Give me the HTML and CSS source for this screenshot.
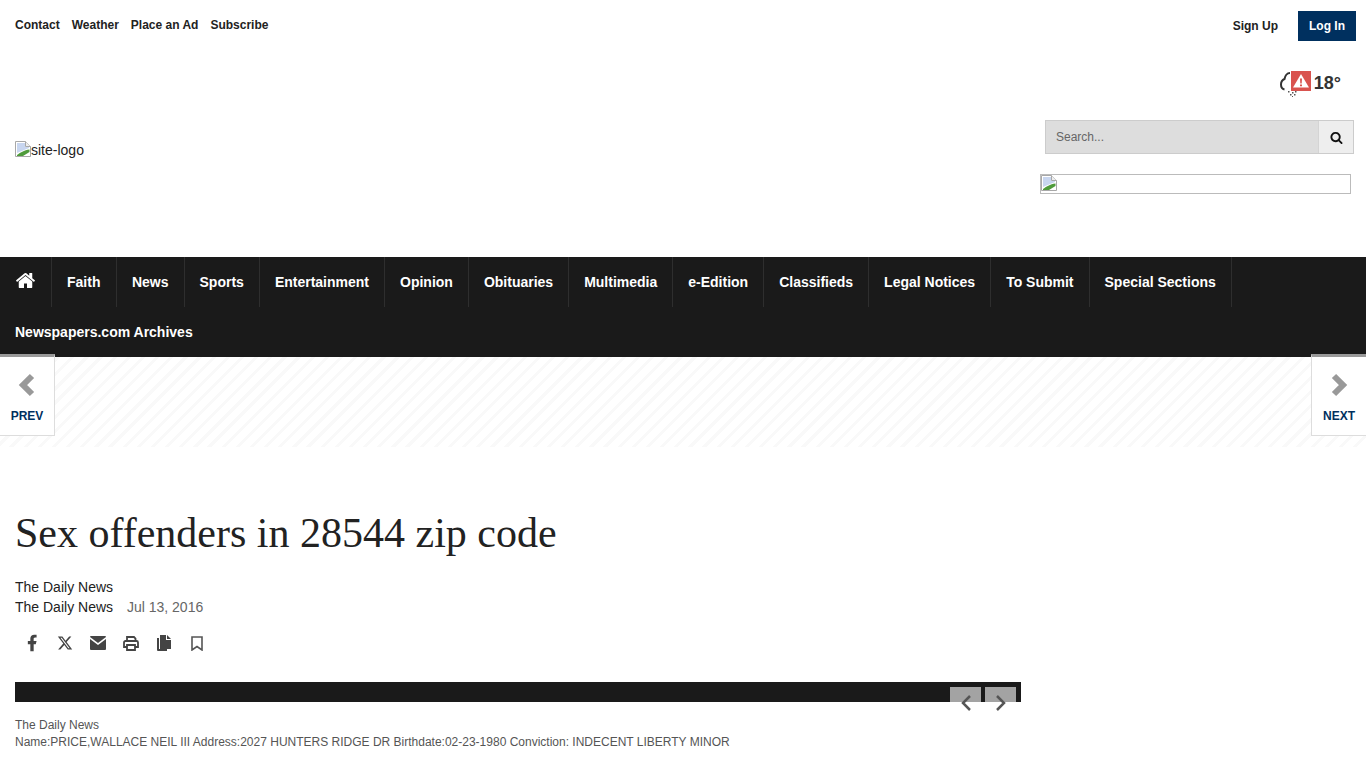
FILE: index.html
```html
<!DOCTYPE html>
<html lang="en">

<head>
    <meta charset="UTF-8" />
    <meta name="viewport" content="width=device-width, initial-scale=1.0" />
    <title>Sex offenders in 28544 zip code</title>
    <link rel="stylesheet" href="styles.css">
</head>

<body>
    <header>
        <div class="top-bar">
            <ul class="top-links">
                <li><a href="#">Contact</a></li>
                <li><a href="#">Weather</a></li>
                <li><a href="#">Place an Ad</a></li>
                <li><a href="#">Subscribe</a></li>
            </ul>
            <div class="account">
                <a href="#" class="sign-up">Sign Up</a>
                <a href="#" class="log-in">Log In</a>
            </div>
        </div>

        <div class="masthead">
            <a href="#" class="logo">
                <svg class="broken-img" viewBox="0 0 16 16">
                    <path d="M.5.5h10l5 5v10H.5z" fill="#fff" stroke="#a8a8a8" />
                    <path d="M2 2h8v4h4v1L2 12z" fill="#c8d6f0" />
                    <path d="M2 15v-1C5 12 9 9 14.500 8.500V11L8 15z" fill="#4f9b3c" />
                    <path d="M10.500.5v5h5" fill="#eee" stroke="#a8a8a8" />
                </svg>site-logo
            </a>
            <div class="masthead-right">
                <div class="weather">
                    <span class="weather-icon">
                        <svg class="cloud" viewBox="0 0 20 26">
                            <path d="M10 2C7 2 5 5 4.500 8 2 9 1 11 1 13.500S2 18 4.500 18.500" fill="none" stroke="#333" stroke-width="2" />
                            <path d="M8 20h1.500v1.500H8zM12 21h1.500v1.500H12zM15 20h1.500v1.500H15zM14 23h1.500v1.500H14zM10 23h1.500v1.500H10zM12 25h1v1h-1z" fill="#555" />
                        </svg>
                        <span class="alert">
                            <svg viewBox="0 0 20 20">
                                <path d="M10 3 18 16.500H2z" fill="#fff" />
                                <path d="M9 7.500h2l-.3 5h-1.400zM9 13.500h2v1.700H9z" fill="#d9534f" />
                            </svg>
                        </span>
                    </span>
                    <span class="temp">18°</span>
                </div>
                <form action="#" class="search">
                    <input type="text" placeholder="Search..." />
                    <button class="search-btn">
                        <svg viewBox="0 0 1792 1792">
                            <path d="M1216 832q0-185-131.500-316.500t-316.500-131.500-316.500 131.500-131.500 316.500 131.500 316.500 316.500 131.500 316.500-131.500 131.500-316.500zm512 832q0 52-38 90t-90 38q-54 0-90-38l-343-342q-179 124-399 124-143 0-273.500-55.500t-225-150-150-225-55.500-273.500 55.500-273.500 150-225 225-150 273.500-55.500 273.500 55.500 225 150 150 225 55.500 273.500q0 220-124 399l343 343q37 37 37 90z" />
                        </svg>
                    </button>
                </form>
                <div class="ad-box">
                    <svg class="broken-img" viewBox="0 0 16 16">
                        <path d="M.5.5h10l5 5v10H.5z" fill="#fff" stroke="#a8a8a8" />
                        <path d="M2 2h8v4h4v1L2 12z" fill="#c8d6f0" />
                        <path d="M2 15v-1C5 12 9 9 14.500 8.500V11L8 15z" fill="#4f9b3c" />
                        <path d="M10.500.5v5h5" fill="#eee" stroke="#a8a8a8" />
                    </svg>
                </div>
            </div>
        </div>

        <nav class="main-nav">
            <a href="#" class="home-link">
                <svg viewBox="0 0 1792 1792">
                    <path d="M1472 992v480q0 26-19 45t-45 19h-384v-384h-256v384h-384q-26 0-45-19t-19-45v-480q0-1 .5-3t.5-3l575-474 575 474q1 2 1 6zm223-69l-62 74q-8 9-21 11h-3q-13 0-21-7l-692-577-692 577q-12 8-24 7-13-2-21-11l-62-74q-8-10-7-23.500t11-21.500l719-599q32-26 76-26t76 26l244 204v-195q0-14 9-23t23-9h192q14 0 23 9t9 23v408l219 182q10 8 11 21.500t-7 23.500z" />
                </svg>
            </a>
            <a href="#" class="faith-link">Faith</a>
            <a href="#">News</a>
            <a href="#">Sports</a>
            <a href="#">Entertainment</a>
            <a href="#">Opinion</a>
            <a href="#">Obituaries</a>
            <a href="#">Multimedia</a>
            <a href="#">e-Edition</a>
            <a href="#">Classifieds</a>
            <a href="#">Legal Notices</a>
            <a href="#">To Submit</a>
            <a href="#">Special Sections</a>
            <a href="#" class="last-link">Newspapers.com Archives</a>
        </nav>
    </header>

    <div class="stripe-band">
        <a href="#" class="pager pager-prev">
            <svg viewBox="0 0 24 30">
                <path d="M17 6 8 15l9 9" />
            </svg>
            <span>PREV</span>
        </a>
        <a href="#" class="pager pager-next">
            <svg viewBox="0 0 24 30">
                <path d="M7 6l9 9-9 9" />
            </svg>
            <span>NEXT</span>
        </a>
    </div>

    <main class="article">
        <h1>Sex offenders in 28544 zip code</h1>
        <div class="byline">
            <div>The Daily News</div>
            <div>The Daily News <time class="date">Jul 13, 2016</time></div>
        </div>

        <ul class="share">
            <li><svg class="icon-f" viewBox="0 0 24 24"><path d="M14 13.500h2.500l1-4H14v-2c0-1.030 0-2 2-2h1.500V2.140c-.326-.043-1.557-.14-2.857-.14C11.928 2 10 3.657 10 6.700v2.800H7v4h3V22h4z" /></svg></li>
            <li><svg class="icon-x" viewBox="0 0 24 24"><path d="M18.244 2.250h3.308l-7.227 8.260 8.502 11.240H16.170l-5.214-6.817L4.990 21.750H1.680l7.730-8.835L1.254 2.250H8.080l4.713 6.231zm-1.161 17.520h1.833L7.084 4.126H5.117z" /></svg></li>
            <li><svg class="icon-mail" viewBox="0 0 16 14"><path d="M1 0h14a1 1 0 0 1 1 1L8 7 0 1a1 1 0 0 1 1-1z" /><path d="M0 3l8 6 8-6v10a1 1 0 0 1-1 1H1a1 1 0 0 1-1-1z" /></svg></li>
            <li>
                <svg class="icon-print" viewBox="0 0 16 15">
                    <path d="M4 5V1h7l1.500 1.500V5" />
                    <path d="M4 11H1V6.500A1.500 1.500 0 0 1 2.500 5h11A1.500 1.500 0 0 1 15 6.500V11h-3" />
                    <path d="M4 9h8v5H4z" />
                </svg>
            </li>
            <li><svg class="icon-copy" viewBox="0 0 14 16"><path d="M0 3h2v11h8v2H1a1 1 0 0 1-1-1z" /><path d="M3 0h6v5h5v9H3z" /><path d="M10 0l4 4h-4z" /></svg></li>
            <li><svg class="icon-bookmark" viewBox="0 0 12 15"><path d="M1 1h10v13l-5-3.500L1 14z" /></svg></li>
        </ul>

        <div class="gallery">
            <button class="gallery-btn gallery-prev">
                <svg viewBox="0 0 16 20"><path d="M11 3 4 10l7 7" /></svg>
            </button>
            <button class="gallery-btn gallery-next">
                <svg viewBox="0 0 16 20"><path d="M5 3l7 7-7 7" /></svg>
            </button>
        </div>

        <div class="caption">
            <div>The Daily News</div>
            <div>Name:PRICE,WALLACE NEIL III Address:2027 HUNTERS RIDGE DR Birthdate:02-23-1980 Conviction: INDECENT LIBERTY MINOR</div>
        </div>
    </main>
</body>

</html>
```

FILE: styles.css
```css
* {
    margin: 0;
    padding: 0;
    box-sizing: border-box;
}

html,
body {
    height: 768px;
    overflow: hidden;
}

body {
    font-family: "Liberation Sans", Arial, sans-serif;
    font-size: 14px;
    color: #222;
    background-color: #fff;
}

a {
    text-decoration: none;
    color: inherit;
}

ul {
    list-style: none;
}

.top-bar {
    display: flex;
    justify-content: space-between;
    height: 51px;
    padding: 11px 10px 0 15px;
}

.top-links {
    display: flex;
    gap: 12px;
    font-size: 12px;
    font-weight: bold;
    line-height: 28px;
    color: #222;
}

.account {
    display: flex;
    align-items: flex-start;
    gap: 20px;
    font-size: 12px;
    font-weight: bold;
}

.sign-up {
    line-height: 30px;
}

.log-in {
    display: block;
    width: 58px;
    height: 30px;
    line-height: 30px;
    text-align: center;
    color: #fff;
    background-color: #00305f;
}

.masthead {
    display: flex;
    justify-content: space-between;
    height: 206px;
}

.logo {
    display: flex;
    align-items: flex-start;
    height: 16px;
    margin: 90px 0 0 15px;
    line-height: 18px;
    color: #222;
}

.broken-img {
    display: block;
    width: 16px;
    height: 16px;
    flex-shrink: 0;
}

.masthead-right {
    display: flex;
    flex-direction: column;
    align-items: flex-end;
    width: 326px;
    padding: 20px 12px 0 0;
}

.weather {
    display: flex;
    align-items: center;
    height: 24px;
    margin-right: 13px;
}

.weather-icon {
    position: relative;
    display: block;
    width: 31px;
    height: 26px;
    margin: 2px 3px 0 0;
}

.cloud {
    display: block;
    width: 20px;
    height: 26px;
}

.alert {
    position: absolute;
    top: 0;
    right: 0;
    width: 20px;
    height: 20px;
    background-color: #d9534f;
}

.alert svg {
    display: block;
    width: 20px;
    height: 20px;
}

.temp {
    font-size: 18px;
    font-weight: bold;
    color: #333;
}

.search {
    display: flex;
    width: 309px;
    height: 34px;
    margin: 25px 0 0;
    border: 1px solid #ccc;
}

.search input {
    flex: 1;
    min-width: 0;
    padding-left: 10px;
    border: 0;
    border-right: 1px solid #d4d4d4;
    font-family: inherit;
    font-size: 12px;
    background-color: #ddd;
}

.search input::placeholder {
    color: #666;
    opacity: 1;
}

.search-btn {
    width: 34px;
    border: 0;
    background-color: #eee;
}

.search-btn svg {
    display: block;
    width: 13px;
    height: 13px;
    margin: auto;
    fill: #111;
}

.ad-box {
    width: 311px;
    height: 20px;
    margin: 20px 3px 0 0;
    border: 1px solid #bbb;
}

.main-nav {
    display: flex;
    flex-wrap: wrap;
    height: 100px;
    background-color: #1a1a1a;
}

.main-nav a {
    height: 50px;
    padding: 0 15px;
    line-height: 50px;
    font-weight: bold;
    color: #fff;
    border-right: 1px solid #2e2e2e;
}

.main-nav .home-link {
    width: 52px;
    padding: 13px 0 0 15px;
}

.main-nav .faith-link {
    padding-right: 15.5px;
}

.home-link svg {
    display: block;
    width: 21px;
    height: 21px;
    fill: #fff;
}

.main-nav .last-link {
    border-right: 0;
}

.stripe-band {
    position: relative;
    height: 90px;
    background: repeating-linear-gradient(135deg, #f9f9f9 0, #f9f9f9 3px, #fff 3px, #fff 10px);
}

.pager {
    position: absolute;
    top: -3px;
    display: flex;
    flex-direction: column;
    align-items: center;
    width: 55px;
    height: 82px;
    padding-top: 13px;
    font-size: 12px;
    font-weight: bold;
    color: #00305f;
    background-color: #fff;
    border: 1px solid #ddd;
    border-top: 3px solid #999;
}

.pager svg {
    display: block;
    width: 24px;
    height: 30px;
    margin-bottom: 9px;
    fill: none;
    stroke: #999;
    stroke-width: 6;
}

.pager-prev {
    left: 0;
    border-left: 0;
}

.pager-next {
    right: 0;
    border-right: 0;
}

.article {
    padding: 0 15px;
}

h1 {
    margin-top: 62px;
    font-family: "Liberation Serif", "Times New Roman", serif;
    font-size: 42px;
    font-weight: normal;
    line-height: 48px;
    color: #222;
}

.byline {
    margin-top: 20px;
    line-height: 20px;
}

.date {
    margin-left: 10px;
    color: #666;
}

.share {
    display: flex;
    align-items: center;
    height: 30px;
    margin-top: 11px;
}

.share li {
    width: 33px;
    display: flex;
    justify-content: center;
}

.share svg {
    display: block;
    fill: #444;
}

.icon-f {
    width: 20px;
    height: 20px;
}

.icon-x {
    width: 16px;
    height: 16px;
}

.icon-mail {
    width: 16px;
    height: 14px;
}

.share .icon-print {
    width: 16px;
    height: 15px;
    fill: #fff;
    stroke: #444;
    stroke-width: 1.800;
}

.icon-copy {
    width: 14px;
    height: 16px;
}

.share .icon-bookmark {
    width: 12px;
    height: 15px;
    fill: none;
    stroke: #555;
    stroke-width: 1.600;
}

.gallery {
    position: relative;
    width: 1006px;
    height: 20px;
    margin-top: 24px;
    background-color: #1a1a1a;
}

.gallery-btn {
    position: absolute;
    top: 5px;
    display: block;
    width: 31px;
    height: 15px;
    border: 0;
    background-color: #a3a3a3;
}

.gallery-btn svg {
    position: absolute;
    top: 6px;
    width: 16px;
    height: 20px;
    fill: none;
    stroke: #555;
    stroke-width: 2.500;
}

.gallery-prev {
    left: 935px;
}

.gallery-prev svg {
    left: 9px;
}

.gallery-next {
    left: 970px;
}

.gallery-next svg {
    left: 7px;
}

.caption {
    margin-top: 15px;
    font-size: 12px;
    line-height: 17px;
    color: #555;
}
```
